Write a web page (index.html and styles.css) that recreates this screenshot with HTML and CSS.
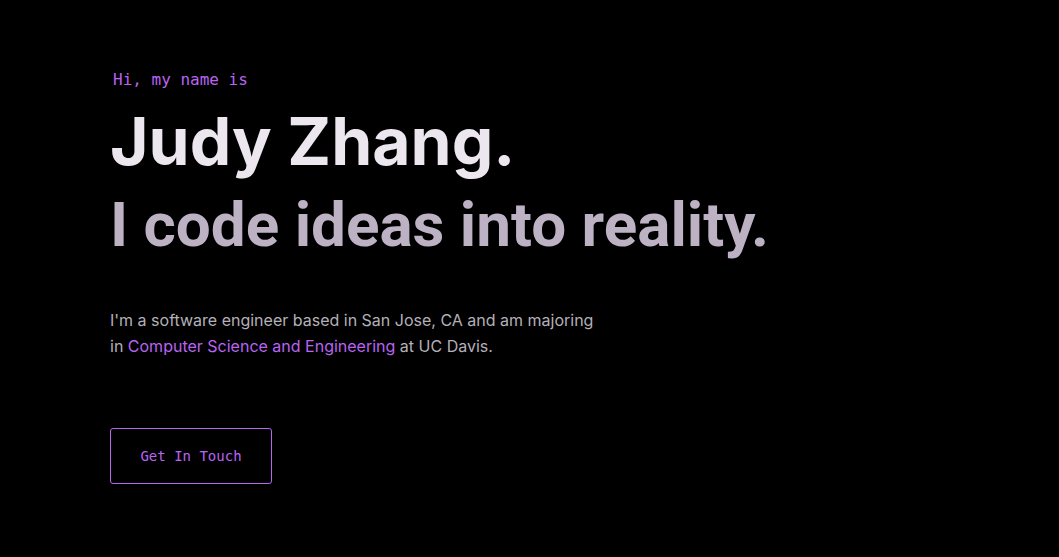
FILE: index.html
```html
<!DOCTYPE html>
<html lang="en">
<head>
<meta charset="utf-8">
<meta name="viewport" content="width=device-width, initial-scale=1">
<title>Judy Zhang</title>
<link rel="stylesheet" href="styles.css">
</head>
<body>
<main class="hero">
  <p class="greeting">Hi, my name is</p>
  <h1 class="name">Judy Zhang.</h1>
  <h2 class="tagline">I code ideas into reality.</h2>
  <p class="intro">I'm a software engineer based in San Jose, CA and am majoring in <a class="link" href="#education">Computer Science and Engineering</a> at UC Davis.</p>
  <a class="cta" href="#contact">Get In Touch</a>
</main>
</body>
</html>
```
FILE: styles.css
```css
* {
  box-sizing: border-box;
  margin: 0;
}

body {
  background: #000;
  font-family: Inter, "Liberation Sans", sans-serif;
}

.hero {
  display: flex;
  flex-direction: column;
  align-items: flex-start;
  padding: 69px 110px;
}

.greeting {
  padding-left: 3px;
  color: #b964f0;
  font-family: "DejaVu Sans Mono", monospace;
  font-size: 16px;
  line-height: 22px;
}

.name {
  margin-top: 10px;
  color: #ece6ee;
  font-size: 66px;
  font-weight: 700;
  line-height: 80px;
}

.tagline {
  color: #bdb2c4;
  font-family: Roboto, "Liberation Sans", sans-serif;
  font-size: 62px;
  font-weight: 700;
  line-height: 88px;
}

.intro {
  max-width: 490px;
  margin-top: 38px;
  color: #b4b0b8;
  font-size: 16px;
  line-height: 26px;
}

.link {
  color: #b964f0;
  text-decoration: none;
}

.cta {
  min-width: 162px;
  margin-top: 69px;
  padding: 17px 28px;
  border: 1px solid #b964f0;
  border-radius: 3px;
  color: #b964f0;
  font-family: "DejaVu Sans Mono", monospace;
  font-size: 14px;
  line-height: 20px;
  text-align: center;
  text-decoration: none;
}
```
